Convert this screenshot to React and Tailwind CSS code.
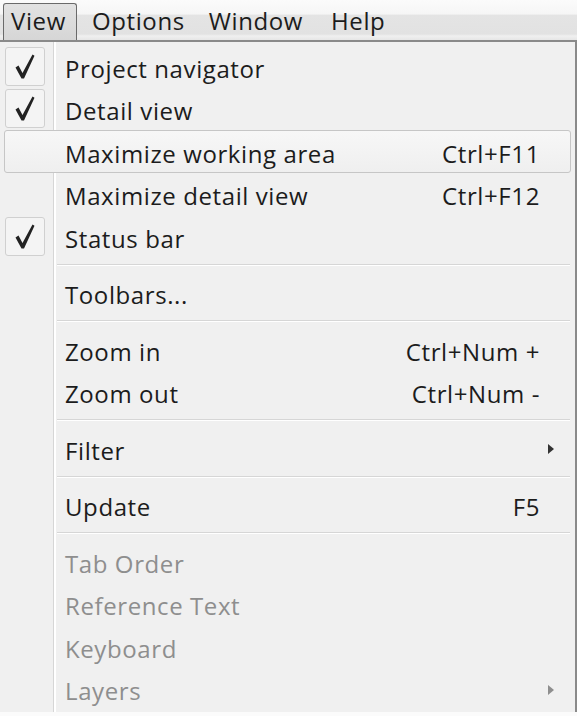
import React from "react";

function Check() {
  return (
    <svg width="20" height="25" viewBox="0 0 20 25" className="block">
      <path d="M0.5 13.5 L3.5 11.5 L7.5 19 L17.5 0.5 L19.5 1.8 L9 24.5 L6.5 24.5 Z" fill="#222" />
    </svg>
  );
}

function Arrow({ color }) {
  return (
    <svg width="6" height="10" viewBox="0 0 6 10" className="block">
      <path d="M0 0 L6 5 L0 10 Z" fill={color} />
    </svg>
  );
}

function Item({ label, shortcut, checked, highlight, disabled, submenu }) {
  const rowCls = highlight
    ? "mx-[4px] h-[42.5px] flex items-center rounded-[3px] border border-[#c6c6c6] bg-[linear-gradient(to_bottom,#f7f7f7,#efefef)]"
    : "mx-[4px] h-[42.5px] flex items-center rounded-[3px] border border-transparent";
  const txt = disabled ? "text-[#8e8e8e]" : "text-[#1c1c1c]";
  return (
    <div className={rowCls}>
      <div className="w-[52px] h-full flex items-center">
        {checked ? (
          <div className="w-[40px] h-[39px] rounded-[3px] border border-[#d0d0d0] bg-[#f4f4f4] flex items-center justify-center">
            <Check />
          </div>
        ) : null}
      </div>
      <div className={"flex-1 pl-[8px] pt-[5px] " + txt}>{label}</div>
      {shortcut ? <div className={"pr-[30px] pt-[5px] " + txt}>{shortcut}</div> : null}
      {submenu ? (
        <div className="pr-[16px] pt-[2px]">
          <Arrow color={disabled ? "#8e8e8e" : "#333"} />
        </div>
      ) : null}
    </div>
  );
}

function Sep() {
  return (
    <div className="ml-[57px] mr-[5px] h-[14px] flex flex-col justify-center">
      <div className="h-[1px] bg-[#d6d6d6]" />
      <div className="h-[1px] bg-white" />
    </div>
  );
}

export default function App() {
  return (
    <div className="w-[577px] h-[716px] bg-[#fbfbfb] overflow-hidden font-['Open_Sans',sans-serif] text-[24px] leading-none tracking-[0.6px]">
      <div className="h-[40px] flex items-end bg-[linear-gradient(to_bottom,#fbfbfb_0%,#f6f6f6_35%,#e4e4e4_38%,#e2e2e2_85%,#f0f0f0_90%,#e6e6e6_100%)]">
        <div className="ml-[3px] w-[74px] h-[37px] rounded-t-[3px] border-[1.5px] border-b-0 border-[#6a6a6a] bg-[linear-gradient(to_bottom,#e2e2e2,#d6d6d6)] flex items-center pl-[7px] pb-[2px] text-[#1c1c1c]">
          View
        </div>
        <div className="h-[37px] flex items-center pb-[2px] text-[#1c1c1c]">
          <span className="ml-[15px]">Options</span>
          <span className="ml-[24px]">Window</span>
          <span className="ml-[28px]">Help</span>
        </div>
      </div>
      <div className="h-[672px] border-t-2 border-r-2 border-[#8a8a8a] bg-[linear-gradient(to_right,#f0f0f0_53px,#d6d6d6_53px,#d6d6d6_54px,#ffffff_54px,#ffffff_56px,#f0f0f0_56px)] pt-[3px]">
        <Item label="Project navigator" checked />
        <Item label="Detail view" checked />
        <Item label="Maximize working area" shortcut="Ctrl+F11" highlight />
        <Item label="Maximize detail view" shortcut="Ctrl+F12" />
        <Item label="Status bar" checked />
        <Sep />
        <Item label="Toolbars..." />
        <Sep />
        <Item label="Zoom in" shortcut="Ctrl+Num +" />
        <Item label="Zoom out" shortcut="Ctrl+Num -" />
        <Sep />
        <Item label="Filter" submenu />
        <Sep />
        <Item label="Update" shortcut="F5" />
        <Sep />
        <Item label="Tab Order" disabled />
        <Item label="Reference Text" disabled />
        <Item label="Keyboard" disabled />
        <Item label="Layers" disabled submenu />
      </div>
    </div>
  );
}
